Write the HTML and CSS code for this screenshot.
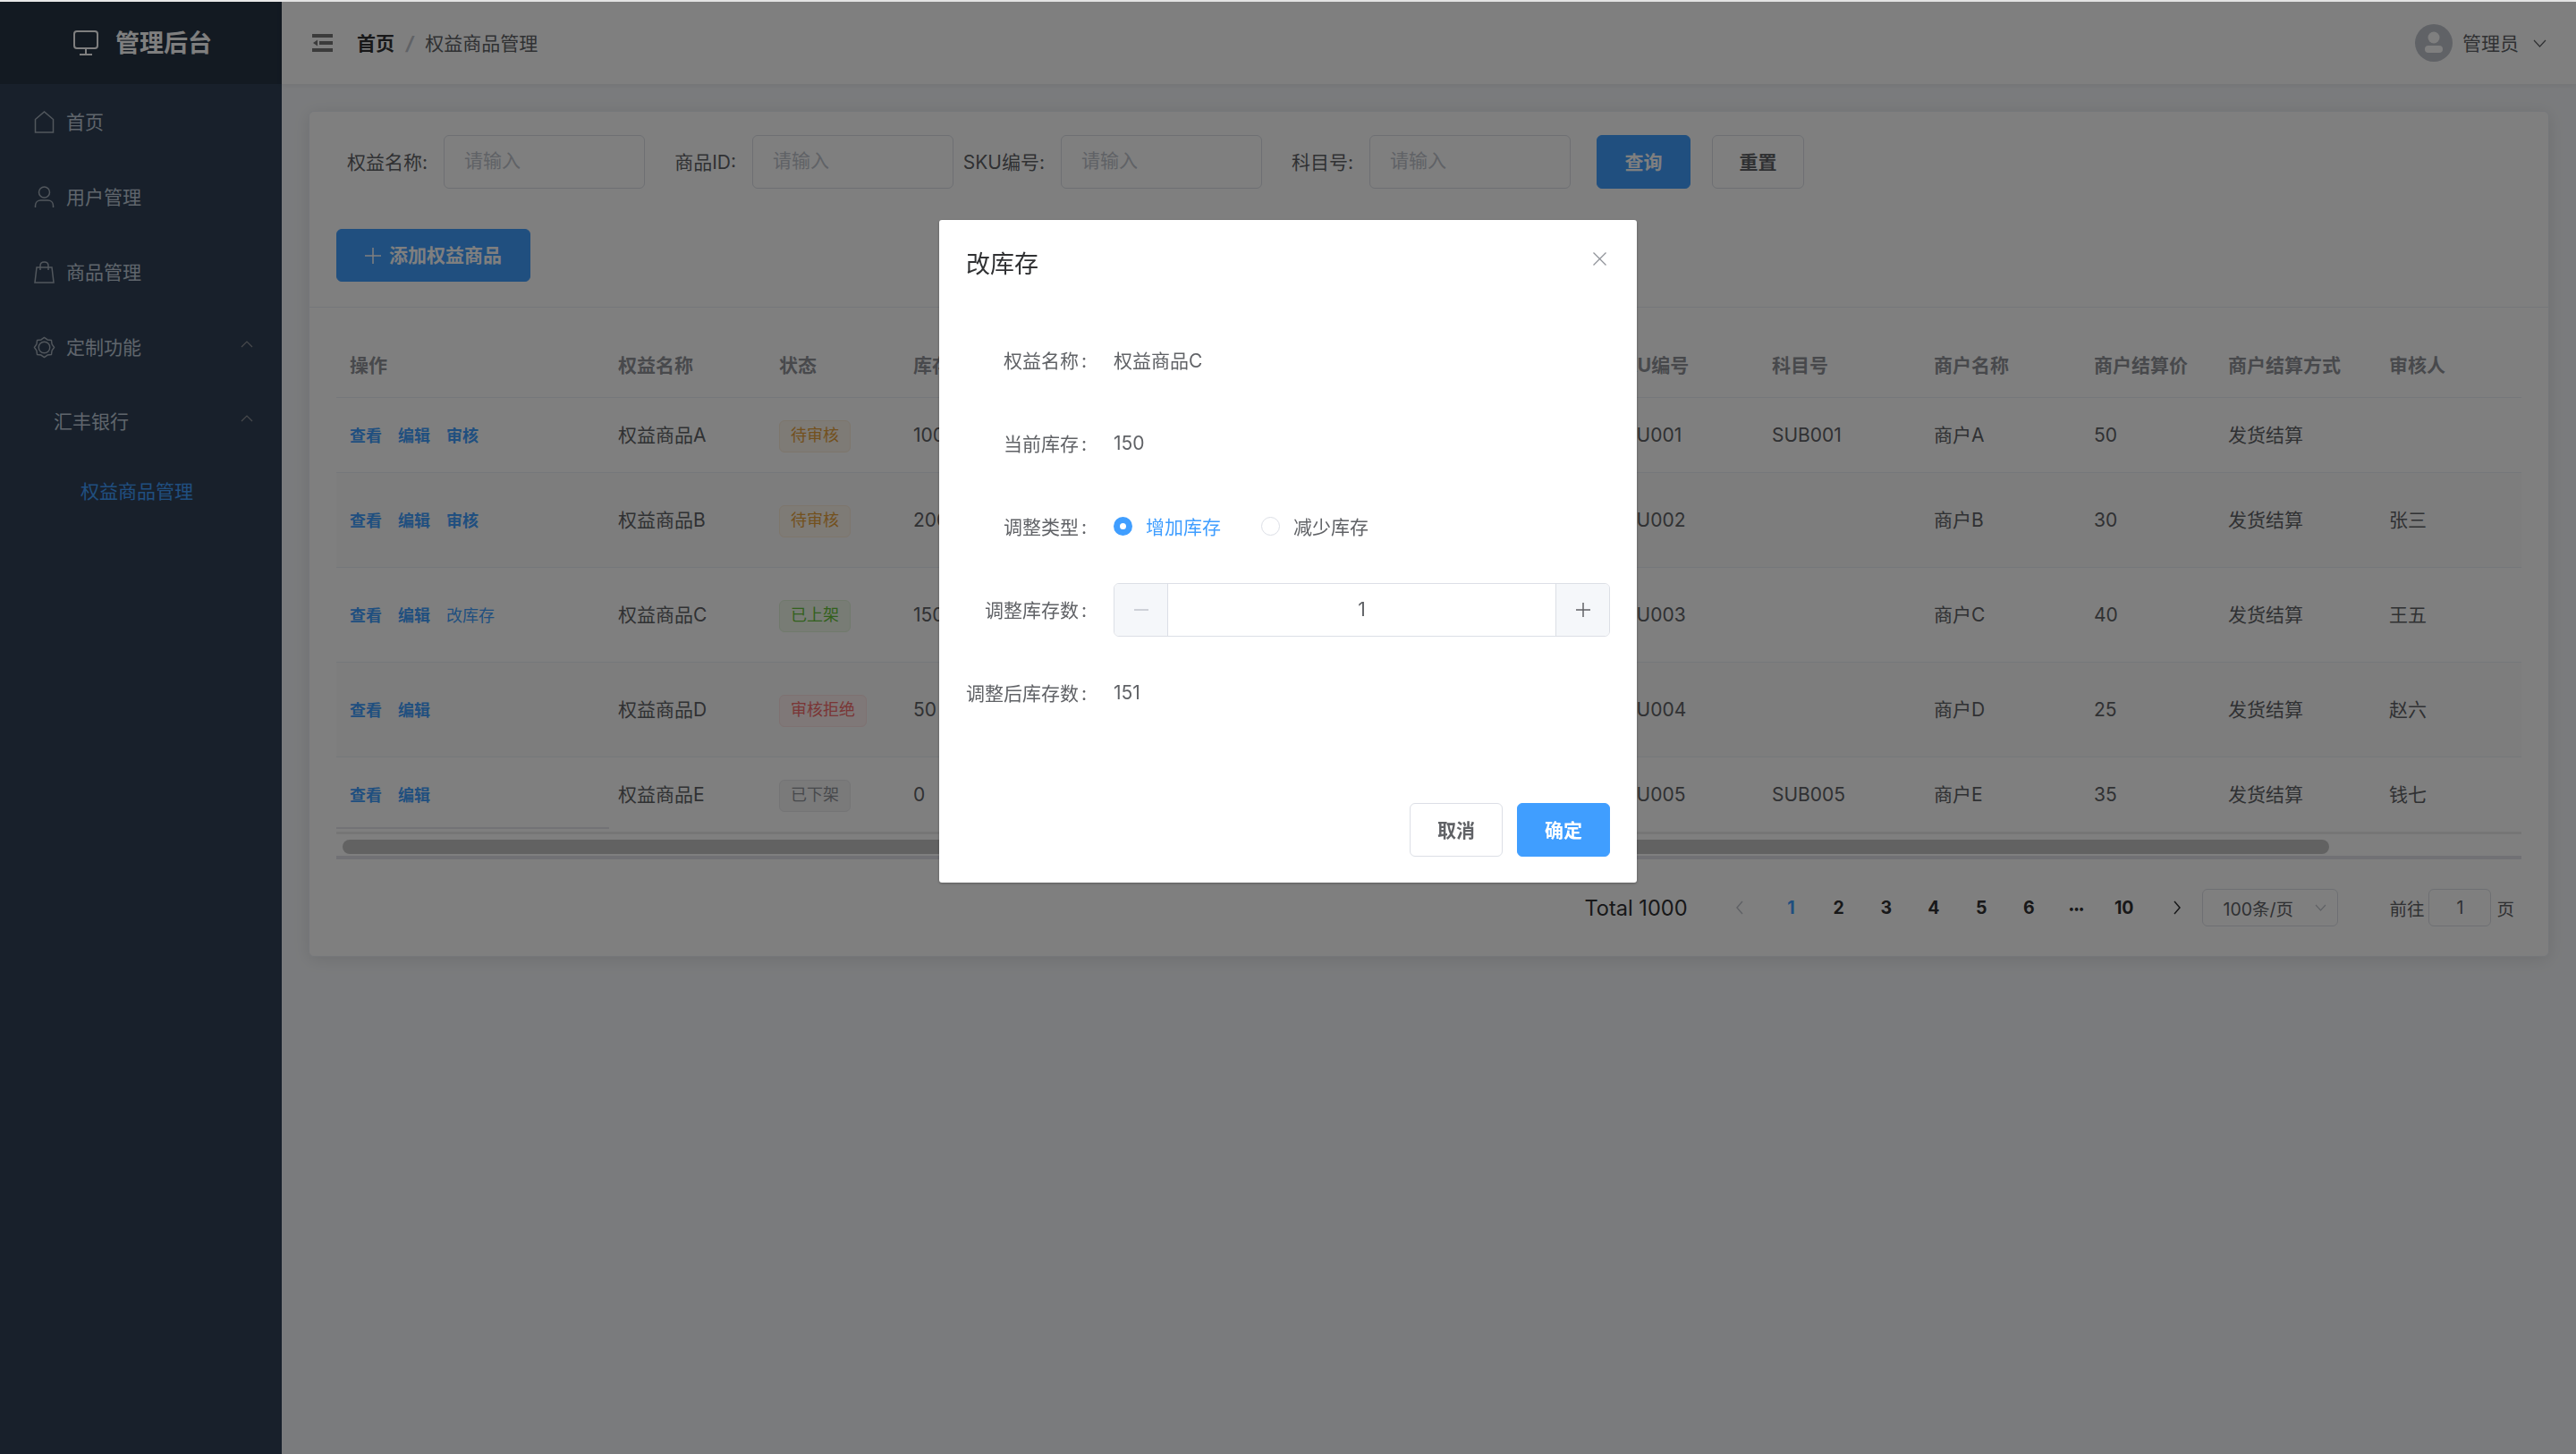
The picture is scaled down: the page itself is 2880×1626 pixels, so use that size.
FILE: index.html
```html
<!DOCTYPE html>
<html lang="zh-CN">
<head>
  <meta charset="UTF-8" />
  <title>权益商品管理</title>
  <link rel="stylesheet" href="styles.css">
</head>
<body>
  <div class="app">
    <aside class="sidebar">
      <div class="logo">
        <svg class="logo-icon" width="30" height="28" viewBox="0 0 30 28" fill="none" stroke="#fff" stroke-width="2"><rect x="2" y="1" width="26" height="19" rx="3"/><path d="M15 20v7M8 27h14"/></svg>
        <span>管理后台</span>
      </div>
      <nav class="menu">
        <div class="menu-item">
          <svg class="menu-icon" width="23" height="25" viewBox="0 0 23 25" fill="none" stroke="currentColor" stroke-width="1.5"><path d="M1.5 9.5 11.5 1l10 8.5V24h-20z"/></svg>
          <span>首页</span>
        </div>
        <div class="menu-item">
          <svg class="menu-icon" width="23" height="25" viewBox="0 0 23 25" fill="none" stroke="currentColor" stroke-width="1.5"><circle cx="11.5" cy="7" r="6"/><path d="M1.5 24v-2c0-4 3-6 6-6h8c3 0 6 2 6 6v2"/></svg>
          <span>用户管理</span>
        </div>
        <div class="menu-item">
          <svg class="menu-icon" width="23" height="25" viewBox="0 0 23 25" fill="none" stroke="currentColor" stroke-width="1.5"><path d="M3 7h17l2 17H1zM7 10V5c0-5.500 9-5.500 9 0v5"/></svg>
          <span>商品管理</span>
        </div>
        <div class="menu-item">
          <svg class="menu-icon" width="25" height="25" viewBox="-1 -1 26 26" fill="none" stroke="currentColor" stroke-width="1.5" stroke-linejoin="round"><path d="M23.500 12l-2.600 3.700-.6 4.600-4.600.6L12 23.500l-3.700-2.600-4.600-.6-.6-4.600L.5 12l2.600-3.700.6-4.600 4.600-.6L12 .5l3.700 2.600 4.600.6.6 4.600z"/><circle cx="12" cy="12" r="6.500"/></svg>
          <span>定制功能</span>
          <svg class="menu-arrow" width="14" height="8" viewBox="0 0 14 8" fill="none" stroke="currentColor" stroke-width="1.2"><path d="M1 7l6-6 6 6"/></svg>
        </div>
        <div class="menu-item sub-title">
          <span>汇丰银行</span>
          <svg class="menu-arrow" width="14" height="8" viewBox="0 0 14 8" fill="none" stroke="currentColor" stroke-width="1.2"><path d="M1 7l6-6 6 6"/></svg>
        </div>
        <div class="menu-item sub-item active">
          <span>权益商品管理</span>
        </div>
      </nav>
    </aside>

    <div class="main">
      <header class="topbar">
        <svg class="toggle" width="23" height="20" viewBox="0 0 23 20" fill="#777"><rect width="23" height="4"/><rect x="8" y="8" width="15" height="4"/><rect y="16" width="23" height="4"/><path d="M6 6.500v7L1 10z"/></svg>
        <div class="breadcrumb">
          <b>首页</b><i>/</i><span>权益商品管理</span>
        </div>
        <div class="user">
          <svg width="42" height="42" viewBox="0 0 42 42"><circle cx="21" cy="21" r="21" fill="#c0c4cc"/><circle cx="21" cy="15" r="6.500" fill="#fff"/><rect x="11" y="24" width="20" height="8" rx="4" fill="#fff"/></svg>
          <span>管理员</span>
          <svg class="user-arrow" width="15" height="9" viewBox="0 0 15 9" fill="none" stroke="#606266" stroke-width="1.2"><path d="M1 1l6.500 7L14 1"/></svg>
        </div>
      </header>

      <div class="content">
        <section class="card">
          <div class="card-head">
            <form class="search">
              <label class="field"><span>权益名称:</span><input placeholder="请输入"></label>
              <label class="field"><span>商品ID:</span><input placeholder="请输入"></label>
              <label class="field"><span>SKU编号:</span><input placeholder="请输入"></label>
              <label class="field"><span>科目号:</span><input placeholder="请输入"></label>
              <div class="search-btns">
                <button type="button" class="btn primary query">查询</button>
                <button type="button" class="btn reset">重置</button>
              </div>
            </form>
            <button type="button" class="btn primary add">
              <svg width="18" height="18" viewBox="0 0 18 18" stroke="currentColor" stroke-width="1.5"><path d="M9 0v18M0 9h18"/></svg>
              添加权益商品
            </button>
          </div>

          <div class="card-body">
            <div class="table-wrap">
              <table class="table">
                <colgroup>
                  <col class="c-ops"><col class="c-name"><col class="c-status"><col class="c-stock">
                  <col class="c-sku"><col class="c-sub"><col class="c-shop"><col class="c-price"><col class="c-way"><col class="c-audit">
                </colgroup>
                <thead>
                  <tr>
                    <th>操作</th><th>权益名称</th><th>状态</th><th>库存</th><th>SKU编号</th>
                    <th>科目号</th><th>商户名称</th><th>商户结算价</th><th>商户结算方式</th><th>审核人</th>
                  </tr>
                </thead>
                <tbody>
                  <tr class="short">
                    <td class="ops"><a>查看</a><a>编辑</a><a>审核</a></td>
                    <td>权益商品A</td><td><span class="tag warn">待审核</span></td><td class="latin">100</td><td class="latin">SKU001</td>
                    <td class="latin">SUB001</td><td>商户A</td><td class="latin">50</td><td>发货结算</td><td></td>
                  </tr>
                  <tr class="striped">
                    <td class="ops"><a>查看</a><a>编辑</a><a>审核</a></td>
                    <td>权益商品B</td><td><span class="tag warn">待审核</span></td><td class="latin">200</td><td class="latin">SKU002</td>
                    <td></td><td>商户B</td><td class="latin">30</td><td>发货结算</td><td>张三</td>
                  </tr>
                  <tr>
                    <td class="ops"><a>查看</a><a>编辑</a><a class="plain">改库存</a></td>
                    <td>权益商品C</td><td><span class="tag ok">已上架</span></td><td class="latin">150</td><td class="latin">SKU003</td>
                    <td></td><td>商户C</td><td class="latin">40</td><td>发货结算</td><td>王五</td>
                  </tr>
                  <tr class="striped">
                    <td class="ops"><a>查看</a><a>编辑</a></td>
                    <td>权益商品D</td><td><span class="tag bad">审核拒绝</span></td><td class="latin">50</td><td class="latin">SKU004</td>
                    <td></td><td>商户D</td><td class="latin">25</td><td>发货结算</td><td>赵六</td>
                  </tr>
                  <tr class="short">
                    <td class="ops"><a>查看</a><a>编辑</a></td>
                    <td>权益商品E</td><td><span class="tag off">已下架</span></td><td class="latin">0</td><td class="latin">SKU005</td>
                    <td class="latin">SUB005</td><td>商户E</td><td class="latin">35</td><td>发货结算</td><td>钱七</td>
                  </tr>
                </tbody>
              </table>
              <div class="scrollbar"><div class="thumb"></div></div>
            </div>

            <div class="pagination">
              <span class="total">Total 1000</span>
              <span class="page arrow prev"><svg width="10" height="16" viewBox="0 0 10 16" fill="none" stroke="#c0c4cc" stroke-width="1.500"><path d="M8 1 2 8l6 7"/></svg></span>
              <span class="page current">1</span>
              <span class="page">2</span>
              <span class="page">3</span>
              <span class="page">4</span>
              <span class="page">5</span>
              <span class="page">6</span>
              <span class="page dots">•••</span>
              <span class="page">10</span>
              <span class="page arrow next"><svg width="10" height="16" viewBox="0 0 10 16" fill="none" stroke="#303133" stroke-width="1.500"><path d="m2 1 6 7-6 7"/></svg></span>
              <div class="size-select">
                <span>100条/页</span>
                <svg width="13" height="8" viewBox="0 0 13 8" fill="none" stroke="#c0c4cc" stroke-width="1.200"><path d="m1 1 5.500 6L12 1"/></svg>
              </div>
              <span class="jump">前往</span>
              <span class="jump-input">1</span>
              <span class="jump-end">页</span>
            </div>
          </div>
        </section>
      </div>
    </div>
  </div>

  <div class="overlay">
    <div class="dialog">
      <div class="dialog-head">
        <span class="dialog-title">改库存</span>
        <svg class="dialog-close" width="15" height="15" viewBox="0 0 15 15" stroke="#909399" stroke-width="1.300"><path d="M.5.500l14 14M14.500.500l-14 14"/></svg>
      </div>
      <div class="dialog-form">
        <div class="row"><label>权益名称<i>:</i></label><div class="value">权益商品C</div></div>
        <div class="row"><label>当前库存<i>:</i></label><div class="value">150</div></div>
        <div class="row">
          <label>调整类型<i>:</i></label>
          <div class="radios">
            <span class="radio checked"><i></i>增加库存</span>
            <span class="radio"><i></i>减少库存</span>
          </div>
        </div>
        <div class="row">
          <label>调整库存数<i>:</i></label>
          <div class="stepper">
            <span class="step disabled"><svg width="16" height="16" viewBox="0 0 16 16" stroke="currentColor" stroke-width="1.500"><path d="M0 8h16"/></svg></span>
            <span class="step-value">1</span>
            <span class="step"><svg width="16" height="16" viewBox="0 0 16 16" stroke="currentColor" stroke-width="1.500"><path d="M8 0v16M0 8h16"/></svg></span>
          </div>
        </div>
        <div class="row"><label>调整后库存数<i>:</i></label><div class="value">151</div></div>
      </div>
      <div class="dialog-foot">
        <button type="button" class="btn">取消</button>
        <button type="button" class="btn primary">确定</button>
      </div>
    </div>
  </div>
</body>
</html>
```

FILE: styles.css
```css
* {
  box-sizing: border-box;
}

html, body {
  height: 100%;
}

body {
  margin: 0;
  padding-top: 2px;
  background: #e8e8e8;
  overflow: hidden;
  font-family: Inter, "Noto Sans CJK SC", sans-serif;
  font-size: 21px;
  color: #606266;
}

.app {
  display: flex;
  height: 100%;
}

/* sidebar */
.sidebar {
  width: 315px;
  flex-shrink: 0;
  background: #304156;
  color: #bfcbd9;
}

.logo {
  height: 92px;
  background: #263445;
  display: flex;
  align-items: center;
  padding-left: 81px;
  gap: 18px;
  color: #fff;
  font-size: 27px;
  font-weight: 700;
}

.logo span {
  padding-bottom: 3px;
}

.menu-item {
  height: 84px;
  display: flex;
  align-items: center;
  padding: 0 32px 0 37px;
}

.menu-item span {
  padding-bottom: 3px;
}

.menu-icon {
  flex-shrink: 0;
  width: 25px;
  margin-right: 12px;
  color: #a4aeba;
}

.menu-arrow {
  margin-left: auto;
  margin-top: -6px;
  color: #909399;
}

.sub-title {
  padding-left: 60px;
  padding-bottom: 2px;
}

.sub-item {
  height: 72px;
  padding-left: 90px;
  padding-bottom: 2px;
}

.active {
  color: #409eff;
}

/* top bar */
.main {
  flex: 1;
  min-width: 0;
  display: flex;
  flex-direction: column;
  background: #f5f7fa;
}

.topbar {
  height: 92px;
  flex-shrink: 0;
  background: #fff;
  display: flex;
  align-items: center;
  padding: 0 33px 0 34px;
  box-shadow: 0 1px 6px rgba(0, 21, 41, .08);
}

.toggle {
  margin-right: 27px;
}

.breadcrumb {
  padding-bottom: 3px;
}

.breadcrumb b {
  color: #303133;
  font-weight: 700;
}

.breadcrumb i {
  margin: 0 13px;
  color: #c0c4cc;
  font-weight: 700;
}

.user {
  margin-left: auto;
  display: flex;
  align-items: center;
  gap: 11px;
}

.user span {
  padding-bottom: 3px;
}

.user-arrow {
  margin-left: 5px;
}

/* card */
.content {
  padding: 30px 30px 0;
}

.card {
  background: #fff;
  border: 1px solid #ebeef5;
  border-radius: 6px;
  box-shadow: 0 3px 18px rgba(0, 0, 0, .1);
}

.card-head {
  padding: 26px 30px 28px;
  border-bottom: 1px solid #ebeef5;
}

.search {
  display: flex;
  margin-bottom: 45px;
}

.field {
  width: 345px;
  display: flex;
  align-items: center;
  color: #606266;
}

.field span {
  width: 120px;
  flex-shrink: 0;
  padding: 0 18px 3px 0;
  text-align: right;
}

.field input {
  width: 225px;
  height: 60px;
  padding: 0 22px 3px;
  border: 1px solid #dcdfe6;
  border-radius: 6px;
  font: inherit;
  background: #fff;
}

.field input::placeholder {
  color: #c0c4cc;
}

.search-btns {
  display: flex;
  margin-left: 29px;
  gap: 24px;
}

.btn {
  height: 60px;
  padding: 0 0 3px;
  background: #fff;
  border: 1px solid #dcdfe6;
  border-radius: 6px;
  color: #606266;
  font: inherit;
  font-weight: 700;
}

.btn.primary {
  background: #409eff;
  border-color: #409eff;
  color: #fff;
}

.query {
  width: 105px;
}

.reset {
  width: 103px;
}

.add {
  width: 217px;
  height: 59px;
  display: flex;
  align-items: center;
  justify-content: center;
  gap: 9px;
}

.add svg {
  margin-top: 3px;
}

/* table */
.card-body {
  padding: 30px 30px 33px;
}

.table-wrap {
  position: relative;
  overflow: hidden;
}

.table-wrap::after {
  content: "";
  position: absolute;
  left: 0;
  top: 551px;
  width: 305px;
  height: 2px;
  background: #e4e7ed;
}

.table {
  width: 2443px;
  table-layout: fixed;
  border-collapse: collapse;
}

.c-ops { width: 300px; }
.c-name { width: 180px; }
.c-status { width: 150px; }
.c-stock { width: 781px; }
.c-sku { width: 179px; }
.c-sub { width: 181px; }
.c-shop { width: 179px; }
.c-price { width: 150px; }
.c-way { width: 180px; }
.c-audit { width: 163px; }

.table th {
  height: 70px;
  padding: 0 15px 3px;
  text-align: left;
  color: #909399;
  font-weight: 700;
  border-bottom: 1px solid #ebeef5;
  white-space: nowrap;
}

.table td {
  height: 106px;
  padding: 0 15px 2px;
  border-bottom: 1px solid #ebeef5;
  white-space: nowrap;
}

.table .short td {
  height: 84px;
}

.table tr:last-child td {
  border-bottom: 0;
}

.table td.ops,
.table td.latin {
  padding-bottom: 0;
}

.striped td {
  background: #fafafa;
}

.ops a {
  margin-right: 18px;
  color: #409eff;
  font-size: 18px;
  font-weight: 700;
}

.ops a.plain {
  font-weight: 400;
}

.tag {
  display: inline-block;
  height: 36px;
  margin-top: 5px;
  padding: 0 12px;
  border: 1px solid;
  border-radius: 6px;
  font-size: 18px;
  line-height: 32px;
  vertical-align: middle;
}

.warn {
  color: #e6a23c;
  background: #fdf6ec;
  border-color: #faecd8;
}

.ok {
  color: #67c23a;
  background: #f0f9eb;
  border-color: #e1f3d8;
}

.bad {
  color: #f56c6c;
  background: #fef0f0;
  border-color: #fde2e2;
}

.off {
  color: #909399;
  background: #f4f4f5;
  border-color: #e9e9eb;
}

.scrollbar {
  height: 31px;
  padding: 6px 7px 2px;
  border-top: 3px solid #ececec;
  border-bottom: 4px solid #e2e2ea;
}

.thumb {
  width: 2221px;
  height: 16px;
  background: #c4c4c4;
  border-radius: 8px;
}

/* pagination */
.pagination {
  margin-top: 33px;
  padding-right: 8px;
  height: 42px;
  display: flex;
  justify-content: flex-end;
  align-items: center;
  color: #606266;
  font-size: 19.5px;
}

.total {
  margin-right: 32px;
  font-size: 23.6px;
  color: #303133;
}

.page {
  width: 53.2px;
  text-align: center;
  color: #303133;
  font-weight: 700;
}

.page.current {
  color: #409eff;
}

.dots {
  font-size: 12px;
}

.arrow {
  display: flex;
  justify-content: center;
}

.prev {
  margin-right: 4px;
}

.next {
  margin-left: 6px;
}

.size-select {
  width: 152px;
  height: 42px;
  margin: 0 57px 0 2px;
  padding: 0 12px 0 22px;
  display: flex;
  align-items: center;
  justify-content: space-between;
  border: 1px solid #dcdfe6;
  border-radius: 6px;
}

.jump-input {
  width: 70px;
  height: 42px;
  margin: 0 6px 0 5px;
  border: 1px solid #dcdfe6;
  border-radius: 6px;
  text-align: center;
  line-height: 40px;
}

/* dialog */
.overlay {
  position: fixed;
  top: 2px;
  right: 0;
  bottom: 0;
  left: 0;
  background: rgba(0, 0, 0, .5);
  display: flex;
  justify-content: center;
  align-items: flex-start;
  padding-top: 244px;
}

.dialog {
  width: 780px;
  padding: 29px 30px;
  background: #fff;
  border-radius: 3px;
  box-shadow: 0 1px 3px rgba(0, 0, 0, .3);
}

.dialog-head {
  display: flex;
  justify-content: space-between;
  height: 36px;
}

.dialog-title {
  padding-top: 3px;
  font-size: 27px;
  line-height: 36px;
  color: #303133;
}

.dialog-close {
  margin: 7px 4px 0 0;
}

.dialog-form {
  margin-top: 62px;
}

.row {
  display: flex;
  align-items: center;
  min-height: 60px;
  margin-bottom: 33px;
}

.row label {
  width: 135px;
  flex-shrink: 0;
  margin-right: 30px;
  padding-bottom: 3px;
  text-align: right;
  white-space: nowrap;
}

.row label i {
  margin-left: 3px;
  font-style: normal;
}

.value,
.radios {
  padding-bottom: 2px;
}

.radios {
  display: flex;
  gap: 45px;
}

.radio {
  display: flex;
  align-items: center;
  gap: 15px;
}

.radio i {
  width: 21px;
  height: 21px;
  border: 1px solid #dcdfe6;
  border-radius: 50%;
}

.radio.checked {
  color: #409eff;
}

.radio.checked i {
  border: 7.500px solid #409eff;
  background: #fff;
}

.stepper {
  flex: 1;
  height: 60px;
  display: flex;
  border: 1px solid #dcdfe6;
  border-radius: 6px;
  overflow: hidden;
}

.step {
  width: 60px;
  display: flex;
  align-items: center;
  justify-content: center;
  background: #f5f7fa;
  color: #606266;
  border-left: 1px solid #dcdfe6;
}

.step.disabled {
  color: #c0c4cc;
  border-left: 0;
  border-right: 1px solid #dcdfe6;
}

.step-value {
  flex: 1;
  text-align: center;
  line-height: 58px;
}

.dialog-foot {
  display: flex;
  justify-content: flex-end;
  gap: 16px;
  margin-top: 93px;
}

.dialog-foot .btn {
  width: 104px;
}
```
